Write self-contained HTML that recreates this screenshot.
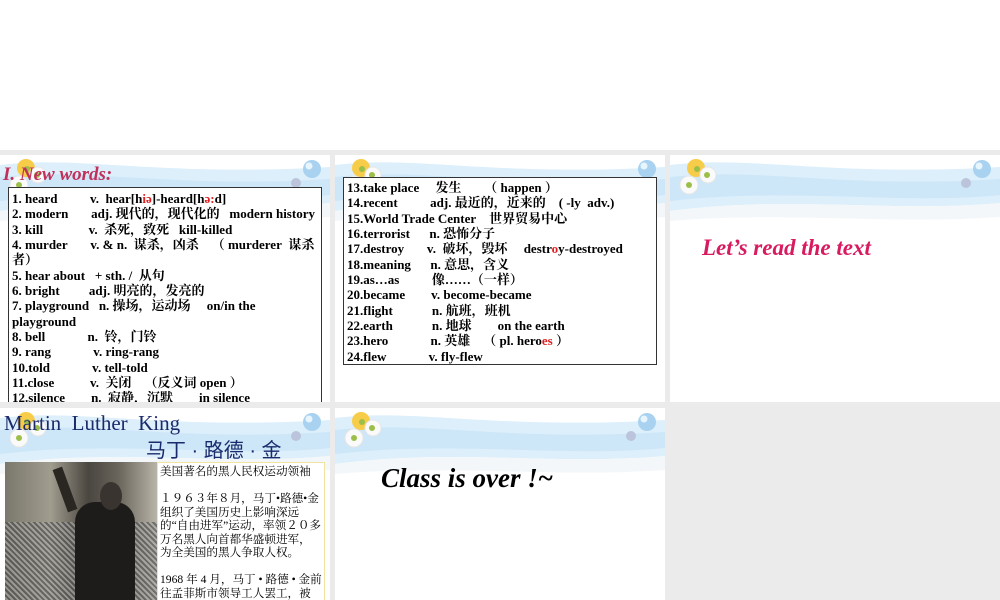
<!DOCTYPE html>
<html><head><meta charset="utf-8"><style>
*{margin:0;padding:0;box-sizing:border-box}
body{width:1000px;height:600px;overflow:hidden;background:#ebebeb;position:relative;font-family:"Liberation Serif","Noto Serif CJK SC",serif}
.top{position:absolute;left:0;top:0;width:1000px;height:150px;background:#fff}
.s{position:absolute;background:#fff;overflow:hidden;width:330px}
.deco{position:absolute;left:0;top:0}
.box{position:absolute;border:1px solid #333;background:#fff;font-weight:bold;font-size:13px;line-height:15.35px;color:#000;padding:0 3px}
.box div{white-space:nowrap}
.r{color:#e02020}
</style></head><body>
<div class="top"></div>

<svg width="0" height="0" style="position:absolute"><defs>
<g id="hd">
<path d="M0 10 C80 0 160 22 330 12 L330 48 C220 58 120 40 0 56 Z" fill="#dcefFb"/>
<path d="M0 22 C90 12 170 34 330 24 L330 40 C230 50 120 32 0 46 Z" fill="#cde6f8"/>
<path d="M0 56 C120 40 220 58 330 48 L330 62 C220 70 120 56 0 66 Z" fill="#f4f7f9"/>
<circle cx="312" cy="14" r="9" fill="#a8d2f0"/><circle cx="309" cy="11" r="3.5" fill="#e8f5fd"/>
<circle cx="296" cy="28" r="5" fill="#bcc4dc"/>
<circle cx="26" cy="13" r="9" fill="#f7cc48"/><circle cx="27" cy="14" r="3" fill="#9cbf4a"/>
<circle cx="38" cy="20" r="8" fill="#fafafa" stroke="#e6e6e6"/><circle cx="37" cy="20" r="3" fill="#9cbf4a"/>
<circle cx="19" cy="30" r="9" fill="#fafafa" stroke="#e6e6e6"/><circle cx="19" cy="30" r="3" fill="#9cbf4a"/>
</g></defs></svg>

<!-- slide 1 -->
<div class="s" style="left:0;top:155px;height:247px">
<svg class="deco" width="330" height="70"><use href="#hd"/></svg>
<div style="position:absolute;left:3px;top:9px;font-size:19px;font-style:italic;font-weight:bold;color:#c0305a;font-family:'Liberation Serif',serif">I. New words:</div>
<div class="box" style="left:8px;top:32px;width:314px;height:230px;padding-top:3px">
<div>1. heard&nbsp;&nbsp;&nbsp;&nbsp;&nbsp;&nbsp;&nbsp;&nbsp;&nbsp;&nbsp;v.&nbsp; hear[h<span class="r">iə</span>]-heard[h<span class="r">ə:</span>d]</div>
<div>2. modern&nbsp;&nbsp;&nbsp;&nbsp;&nbsp;&nbsp; adj. 现代的，现代化的&nbsp;&nbsp; modern history</div>
<div>3. kill&nbsp;&nbsp;&nbsp;&nbsp;&nbsp;&nbsp;&nbsp;&nbsp;&nbsp;&nbsp;&nbsp;&nbsp;&nbsp; v.&nbsp; 杀死，致死&nbsp;&nbsp; kill-killed</div>
<div>4. murder&nbsp;&nbsp;&nbsp;&nbsp;&nbsp;&nbsp; v. &amp; n.&nbsp; 谋杀，凶杀&nbsp;&nbsp;&nbsp; （ murderer&nbsp; 谋杀</div>
<div>者）</div>
<div>5. hear about&nbsp;&nbsp; + sth. /&nbsp; 从句</div>
<div>6. bright&nbsp;&nbsp;&nbsp;&nbsp;&nbsp;&nbsp;&nbsp;&nbsp; adj. 明亮的，发亮的</div>
<div>7. playground&nbsp;&nbsp; n. 操场，运动场&nbsp;&nbsp;&nbsp;&nbsp; on/in the</div>
<div>playground</div>
<div>8. bell&nbsp;&nbsp;&nbsp;&nbsp;&nbsp;&nbsp;&nbsp;&nbsp;&nbsp;&nbsp;&nbsp;&nbsp; n.&nbsp; 铃，门铃</div>
<div>9. rang&nbsp;&nbsp;&nbsp;&nbsp;&nbsp;&nbsp;&nbsp;&nbsp;&nbsp;&nbsp;&nbsp;&nbsp; v. ring-rang</div>
<div>10.told&nbsp;&nbsp;&nbsp;&nbsp;&nbsp;&nbsp;&nbsp;&nbsp;&nbsp;&nbsp;&nbsp;&nbsp; v. tell-told</div>
<div>11.close&nbsp;&nbsp;&nbsp;&nbsp;&nbsp;&nbsp;&nbsp;&nbsp;&nbsp;&nbsp; v.&nbsp; 关闭&nbsp;&nbsp;&nbsp; （反义词 open ）</div>
<div>12.silence&nbsp;&nbsp;&nbsp;&nbsp;&nbsp;&nbsp;&nbsp; n.&nbsp; 寂静，沉默&nbsp;&nbsp;&nbsp;&nbsp;&nbsp;&nbsp;&nbsp; in silence</div>
</div>
</div>

<!-- slide 2 -->
<div class="s" style="left:335px;top:155px;height:247px">
<svg class="deco" width="330" height="70"><use href="#hd"/></svg>
<div class="box" style="left:8px;top:22px;width:314px;height:188px;padding-top:2px">
<div>13.take place&nbsp;&nbsp;&nbsp;&nbsp; 发生&nbsp;&nbsp;&nbsp;&nbsp;&nbsp;&nbsp; （ happen ）</div>
<div>14.recent&nbsp;&nbsp;&nbsp;&nbsp;&nbsp;&nbsp;&nbsp;&nbsp;&nbsp; adj. 最近的，近来的&nbsp;&nbsp;&nbsp; ( -ly&nbsp; adv.)</div>
<div>15.World Trade Center&nbsp;&nbsp;&nbsp; 世界贸易中心</div>
<div>16.terrorist&nbsp;&nbsp;&nbsp;&nbsp;&nbsp; n. 恐怖分子</div>
<div>17.destroy&nbsp;&nbsp;&nbsp;&nbsp;&nbsp;&nbsp; v.&nbsp; 破坏，毁坏&nbsp;&nbsp;&nbsp;&nbsp; destr<span class="r">o</span>y-destroyed</div>
<div>18.meaning&nbsp;&nbsp;&nbsp;&nbsp;&nbsp; n. 意思，含义</div>
<div>19.as…as&nbsp;&nbsp;&nbsp;&nbsp;&nbsp;&nbsp;&nbsp;&nbsp;&nbsp; 像……（一样）</div>
<div>20.became&nbsp;&nbsp;&nbsp;&nbsp;&nbsp;&nbsp;&nbsp; v. become-became</div>
<div>21.flight&nbsp;&nbsp;&nbsp;&nbsp;&nbsp;&nbsp;&nbsp;&nbsp;&nbsp;&nbsp;&nbsp; n. 航班，班机</div>
<div>22.earth&nbsp;&nbsp;&nbsp;&nbsp;&nbsp;&nbsp;&nbsp;&nbsp;&nbsp;&nbsp;&nbsp; n. 地球&nbsp;&nbsp;&nbsp;&nbsp;&nbsp;&nbsp;&nbsp; on the earth</div>
<div>23.hero&nbsp;&nbsp;&nbsp;&nbsp;&nbsp;&nbsp;&nbsp;&nbsp;&nbsp;&nbsp;&nbsp;&nbsp; n. 英雄&nbsp;&nbsp;&nbsp; （ pl. hero<span class="r">es</span> ）</div>
<div>24.flew&nbsp;&nbsp;&nbsp;&nbsp;&nbsp;&nbsp;&nbsp;&nbsp;&nbsp;&nbsp;&nbsp;&nbsp; v. fly-flew</div>
</div>
</div>

<!-- slide 3 -->
<div class="s" style="left:670px;top:155px;height:247px">
<svg class="deco" width="330" height="70"><use href="#hd"/></svg>
<div style="position:absolute;left:32px;top:80px;font-size:23px;font-style:italic;font-weight:bold;color:#d81b60;font-family:'Liberation Serif',serif">Let’s read the text</div>
</div>

<!-- slide 4 -->
<div class="s" style="left:0;top:408px;height:192px">
<svg class="deco" width="330" height="70"><use href="#hd"/></svg>
<div style="position:absolute;left:4px;top:3px;font-size:21px;color:#1a2a6c">Martin&nbsp; Luther&nbsp; King</div>
<div style="position:absolute;left:146px;top:26px;font-size:20px;color:#1a2a6c;font-family:'Liberation Sans','Noto Sans CJK SC',sans-serif">马丁 · 路德 · 金</div>
<div style="position:absolute;left:5px;top:54px;width:152px;height:140px;background:linear-gradient(90deg,#7a786c 0%,#a09c8e 30%,#4a4640 55%,#6a665c 75%,#b8b4a8 100%)">
<div style="position:absolute;left:0;top:60px;width:152px;height:80px;background:repeating-linear-gradient(45deg,#444 0 2px,#aaa 2px 4px);opacity:.6"></div>
<div style="position:absolute;left:70px;top:40px;width:60px;height:100px;background:#1e1c1a;border-radius:20px 20px 0 0"></div>
<div style="position:absolute;left:95px;top:20px;width:22px;height:28px;background:#3a3430;border-radius:50%"></div>
<div style="position:absolute;left:55px;top:5px;width:10px;height:45px;background:#2a2622;transform:rotate(-20deg)"></div>
</div>
<div style="position:absolute;left:157px;top:54px;width:168px;height:145px;border:1px solid #f0e4a0;background:#fff;padding:2px 2px;font-size:11.6px;line-height:13.5px;font-family:'Liberation Serif','Noto Serif CJK SC',serif;color:#000">
美国著名的黑人民权运动领袖<br><br>
１９６３年８月，马丁•路德•金组织了美国历史上影响深远的“自由进军”运动，率领２０多万名黑人向首都华盛顿进军，为全美国的黑人争取人权。<br><br>
1968 年 4 月，马丁 • 路德 • 金前往孟菲斯市领导工人罢工，被人谋杀，年仅 39 岁。
</div>
</div>

<!-- slide 5 -->
<div class="s" style="left:335px;top:408px;height:192px">
<svg class="deco" width="330" height="70"><use href="#hd"/></svg>
<div style="position:absolute;left:46px;top:55px;font-size:27px;font-style:italic;font-weight:bold;color:#000;font-family:'Liberation Serif',serif">Class is over !~</div>
</div>
</body></html>
